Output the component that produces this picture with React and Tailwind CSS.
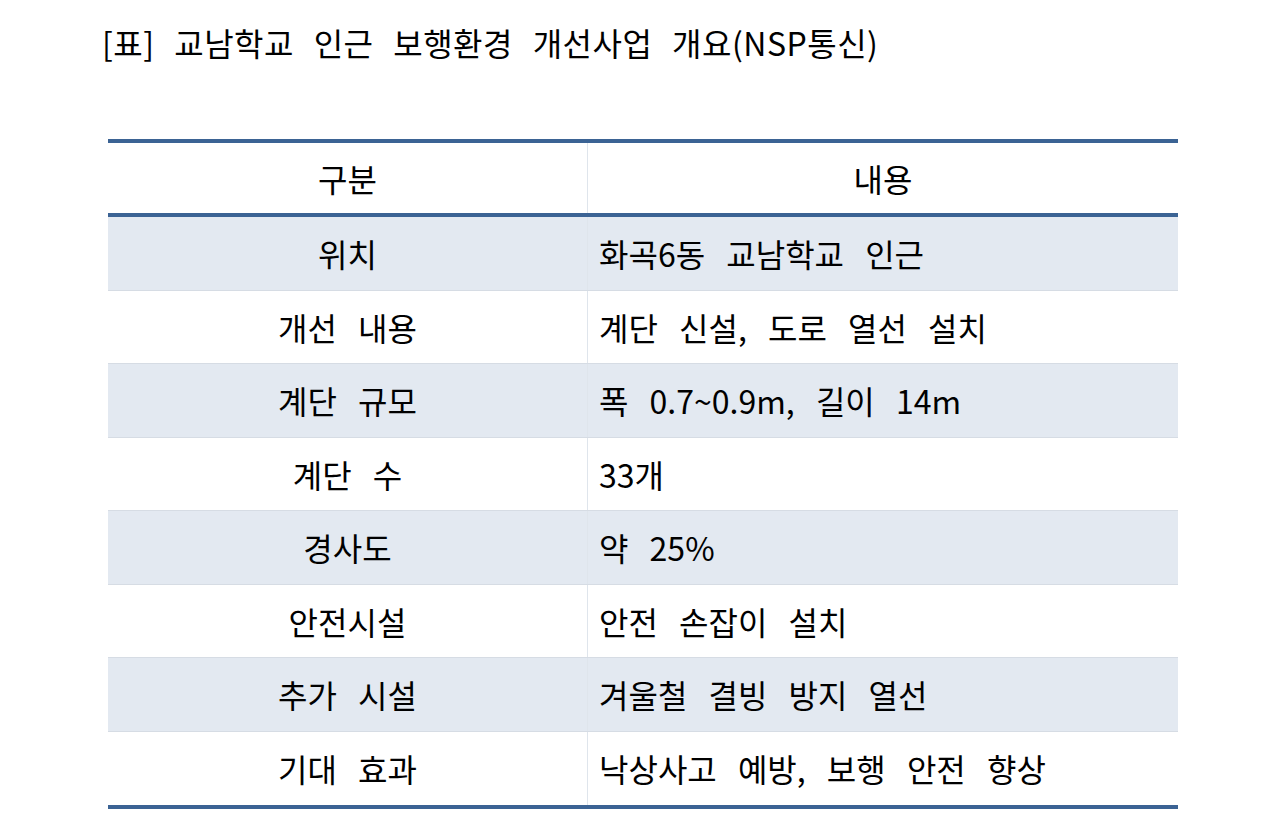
const rows = [
  ['위치', '화곡6동 교남학교 인근'],
  ['개선 내용', '계단 신설, 도로 열선 설치'],
  ['계단 규모', '폭 0.7~0.9m, 길이 14m'],
  ['계단 수', '33개'],
  ['경사도', '약 25%'],
  ['안전시설', '안전 손잡이 설치'],
  ['추가 시설', '겨울철 결빙 방지 열선'],
  ['기대 효과', '낙상사고 예방, 보행 안전 향상'],
]

export default function App() {
  return (
    <div className="w-[1280px] h-[835px] bg-white text-black font-['Noto_Sans_CJK_KR','Noto_Sans',sans-serif]">
      <h1 className="pl-[102px] pt-[22px] text-[32px] leading-[40px] font-normal tracking-[0.5px] [word-spacing:12px]">
        [표] 교남학교 인근 보행환경 개선사업 개요(NSP통신)
      </h1>

      <div className="ml-[108px] mt-[77px] w-[1070px] border-t-4 border-b-4 border-[#3b6394]">
        <div className="grid grid-cols-[480px_1fr] h-[74px] border-b-4 border-[#3b6394] text-[32px]">
          <div className="flex items-center justify-center border-r border-[#dfe5ec]">구분</div>
          <div className="flex items-center justify-center">내용</div>
        </div>
        {rows.map(([k, v], i) => (
          <div
            key={i}
            className={`grid grid-cols-[480px_1fr] h-[73.5px] text-[32px] [word-spacing:14px] ${
              i % 2 === 0 ? 'bg-[#e3e9f1]' : 'bg-white'
            } ${i < rows.length - 1 ? 'border-b border-[#d6dce4]' : ''}`}
          >
            <div className="flex items-center justify-center border-r border-[#dfe5ec]">{k}</div>
            <div className="flex items-center pl-[11px]">{v}</div>
          </div>
        ))}
      </div>
    </div>
  )
}
